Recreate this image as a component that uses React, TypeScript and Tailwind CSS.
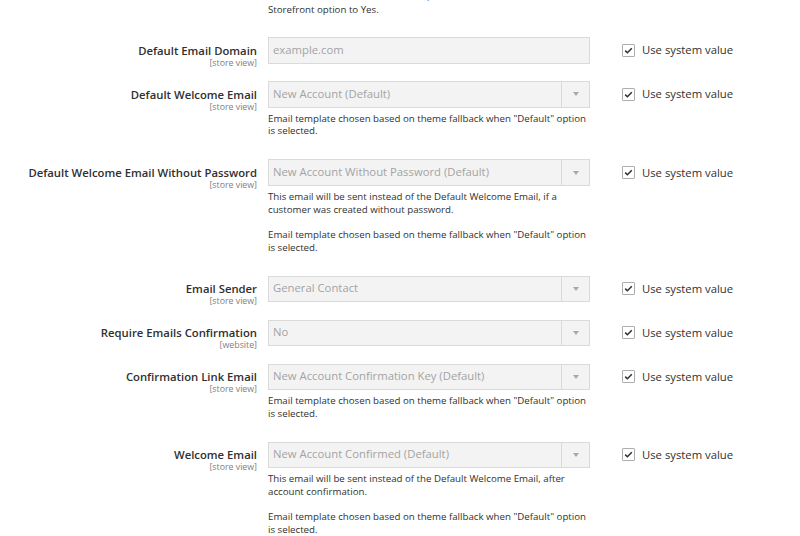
import React from "react";

type RowProps = {
  label: string;
  scope: string;
  value: string;
  select?: boolean;
  notes?: string[][];
};

function Checkbox() {
  return (
    <div className="flex items-center h-[26.4px] ml-[32px]">
      <div className="w-[13px] h-[13px] border border-[#adadad] bg-white flex items-center justify-center rounded-[1px]">
        <svg width="11" height="11" viewBox="0 0 11 11">
          <path d="M2.2 5.6 L4.4 7.8 L8.8 3.2" fill="none" stroke="#303030" strokeWidth="1.5" />
        </svg>
      </div>
      <span className="ml-[7px] text-[11.3px] text-[#303030] leading-[14px]">Use system value</span>
    </div>
  );
}

function Row({ label, scope, value, select, notes }: RowProps) {
  return (
    <div className={`flex items-start ${notes ? "mb-[21.2px]" : "mb-[13px]"}`}>
      <div className="w-[257px] h-[31px] text-right pt-[6.5px] shrink-0">
        <div className="text-[11.3px] font-semibold leading-[14px] text-[#303030]">{label}</div>
        <div className="text-[8.8px] leading-[10.5px] text-[#808080]">{scope}</div>
      </div>
      <div className="ml-[11px] w-[322px] shrink-0">
        <div className="h-[26.4px] border border-[#dadada] bg-[#f3f3f3] flex items-stretch">
          <div className="flex-1 flex items-center pl-[4px] text-[11.3px] text-[#a3a3a3] whitespace-nowrap overflow-hidden">
            {value}
          </div>
          {select && (
            <div className="w-[28px] border-l border-[#dadada] flex items-center justify-center">
              <div className="w-0 h-0 border-l-[3.5px] border-r-[3.5px] border-t-[4px] border-l-transparent border-r-transparent border-t-[#a8a8a8]" />
            </div>
          )}
        </div>
        {notes && (
          <div className="mt-[5px] text-[9.7px] leading-[12.8px] text-[#303030]">
            {notes.map((p, i) => (
              <p key={i} className={i > 0 ? "mt-[12.4px]" : ""}>
                {p.map((l, j) => (
                  <span key={j} className="block whitespace-nowrap">
                    {l}
                  </span>
                ))}
              </p>
            ))}
          </div>
        )}
      </div>
      <Checkbox />
    </div>
  );
}

const tmpl = ['Email template chosen based on theme fallback when "Default" option', "is selected."];

export default function App() {
  return (
    <div
      className="w-[800px] h-[536px] overflow-hidden bg-white"
      style={{ fontFamily: '"Open Sans", "Noto Sans", sans-serif' }}
    >
      <div className="flex">
        <div className="ml-[268px] w-[322px] mt-[-9px] mb-[20.6px] text-[9.7px] leading-[12.8px] text-[#303030]">
          <span className="block whitespace-nowrap">To show VAT number on Storefront, set Show VAT Number on</span>
          <span className="block whitespace-nowrap">Storefront option to Yes.</span>
        </div>
      </div>
      <Row label="Default Email Domain" scope="[store view]" value="example.com" />
      <Row label="Default Welcome Email" scope="[store view]" value="New Account (Default)" select notes={[tmpl]} />
      <Row
        label="Default Welcome Email Without Password"
        scope="[store view]"
        value="New Account Without Password (Default)"
        select
        notes={[
          ["This email will be sent instead of the Default Welcome Email, if a", "customer was created without password."],
          tmpl,
        ]}
      />
      <Row label="Email Sender" scope="[store view]" value="General Contact" select />
      <Row label="Require Emails Confirmation" scope="[website]" value="No" select />
      <Row
        label="Confirmation Link Email"
        scope="[store view]"
        value="New Account Confirmation Key (Default)"
        select
        notes={[tmpl]}
      />
      <Row
        label="Welcome Email"
        scope="[store view]"
        value="New Account Confirmed (Default)"
        select
        notes={[
          ["This email will be sent instead of the Default Welcome Email, after", "account confirmation."],
          tmpl,
        ]}
      />
    </div>
  );
}
